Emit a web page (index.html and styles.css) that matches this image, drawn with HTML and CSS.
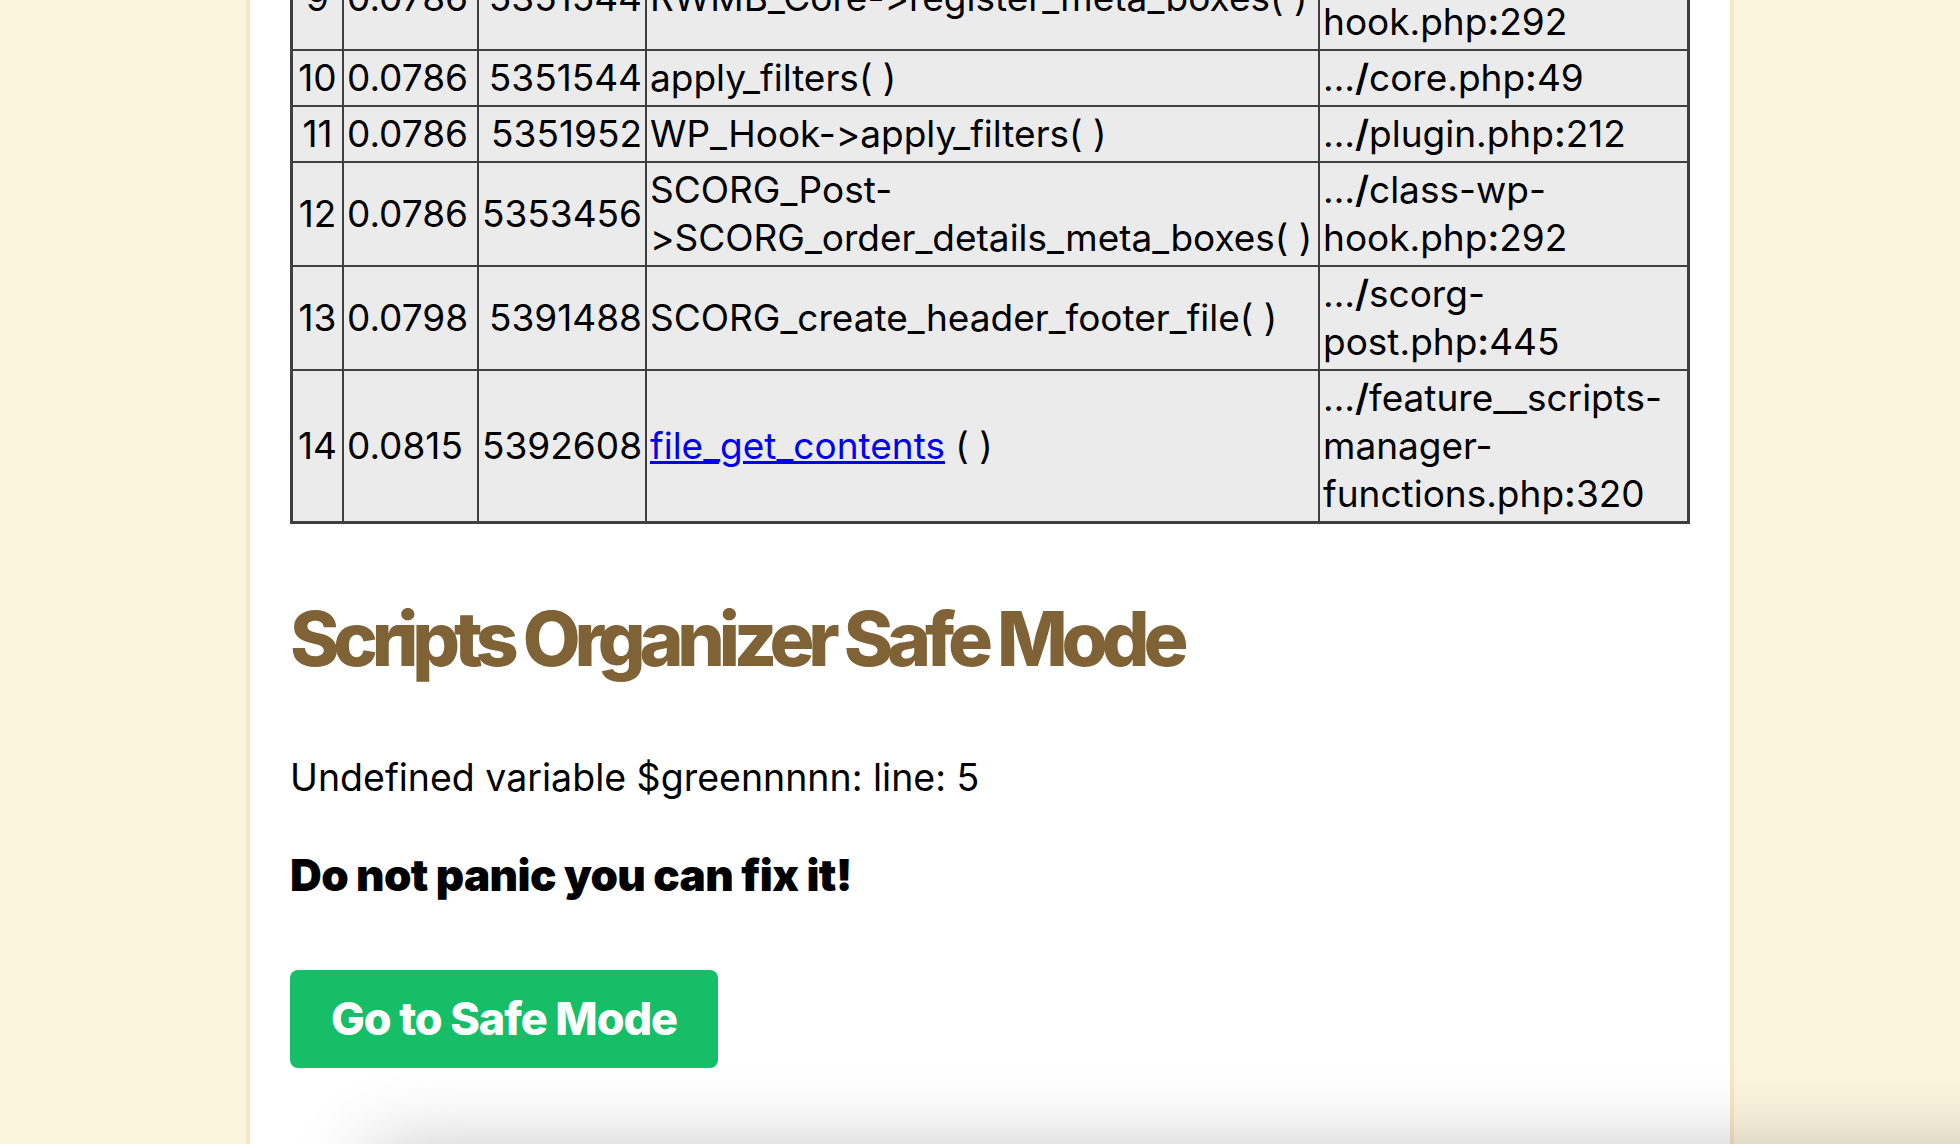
FILE: index.html
```html
<!DOCTYPE html>
<html lang="en">
<head>
<meta charset="utf-8">
<title>Scripts Organizer Safe Mode</title>
<link rel="stylesheet" href="styles.css">
</head>
<body>
<main class="panel">
  <table class="trace">
    <colgroup>
      <col class="c-num"><col class="c-time"><col class="c-mem"><col class="c-fn"><col class="c-loc">
    </colgroup>
    <tbody>
      <tr><td class="num">9</td><td>0.0786</td><td class="mem">5351544</td><td>RWMB_Core-&gt;register_meta_boxes(&nbsp;)</td><td>…<b>/</b>class-wp-hook.php<b>:</b>292</td></tr>
      <tr><td class="num">10</td><td>0.0786</td><td class="mem">5351544</td><td>apply_filters(&nbsp;)</td><td>…<b>/</b>core.php<b>:</b>49</td></tr>
      <tr><td class="num">11</td><td>0.0786</td><td class="mem">5351952</td><td>WP_Hook-&gt;apply_filters(&nbsp;)</td><td>…<b>/</b>plugin.php<b>:</b>212</td></tr>
      <tr><td class="num">12</td><td>0.0786</td><td class="mem">5353456</td><td>SCORG_Post-&gt;SCORG_order_details_meta_boxes(&nbsp;)</td><td>…<b>/</b>class-wp-hook.php<b>:</b>292</td></tr>
      <tr><td class="num">13</td><td>0.0798</td><td class="mem">5391488</td><td>SCORG_create_header_footer_file(&nbsp;)</td><td>…<b>/</b>scorg-post.php<b>:</b>445</td></tr>
      <tr><td class="num">14</td><td>0.0815</td><td class="mem">5392608</td><td><a class="fn-link" href="#">file_get_contents</a>&nbsp;(&nbsp;)</td><td>…<b>/</b>feature__scripts-manager-functions.php<b>:</b>320</td></tr>
    </tbody>
  </table>

  <h1 class="title">Scripts Organizer Safe Mode</h1>
  <p class="msg">Undefined variable $greennnnn: line: 5</p>
  <h3 class="hint">Do not panic you can fix it!</h3>
  <div class="actions">
    <a class="btn" href="#">Go to Safe Mode</a>
  </div>
</main>
<div class="dock-shadow"></div>
</body>
</html>
```

FILE: styles.css
```css
html, body {
  margin: 0;
  height: 100%;
  overflow: hidden;
}

body {
  background: #fcf5de;
  font-family: Inter, "Noto Sans", sans-serif;
  font-feature-settings: "calt" 0;
  font-variant-ligatures: none;
  color: #000;
}

.panel {
  display: flow-root;
  box-sizing: border-box;
  width: 1488px;
  height: 100%;
  margin-left: 246px;
  padding: 0 40px;
  background: #fff;
  border-left: 4px solid #f6e6c3;
  border-right: 4px solid #f6e6c3;
}

.trace {
  width: 100%;
  table-layout: fixed;
  border-collapse: separate;
  border-spacing: 0;
  border: 2px solid #3f3f3f;
  margin-top: -56px;
  font-size: 37px;
  line-height: 48px;
}

.c-num { width: 51px; }
.c-time { width: 135px; }
.c-mem { width: 168px; }
.c-fn { width: 673px; }

.trace td {
  background: #ebebeb;
  border: 1px solid #3f3f3f;
  padding: 3px;
  vertical-align: middle;
  text-align: left;
}

.trace td.num { text-align: center; }
.trace td.mem { text-align: right; }

.trace b { font-weight: 600; }

.fn-link { color: #0000ee; text-decoration: underline; }

.title {
  margin: 70px 0 0;
  font-size: 75px;
  line-height: 90px;
  font-weight: 800;
  letter-spacing: -0.083em;
  color: #7f6337;
}

.msg {
  margin: 70px 0 0;
  font-size: 37.5px;
  line-height: 48px;
}

.hint {
  margin: 49px 0 0;
  font-size: 44px;
  line-height: 48px;
  font-weight: 900;
  letter-spacing: -0.015em;
}

.actions {
  display: flex;
  margin-top: 71px;
}

.btn {
  display: block;
  padding: 22px 41px;
  background: #16be67;
  color: #fff;
  font-size: 45px;
  line-height: 54px;
  font-weight: 800;
  letter-spacing: -0.025em;
  border-radius: 8px;
  text-decoration: none;
}

.dock-shadow {
  position: fixed;
  left: 380px;
  right: -200px;
  top: 1160px;
  height: 200px;
  background: #fff;
  box-shadow: 0 0 80px 10px rgba(0, 0, 0, 0.24);
}
```
